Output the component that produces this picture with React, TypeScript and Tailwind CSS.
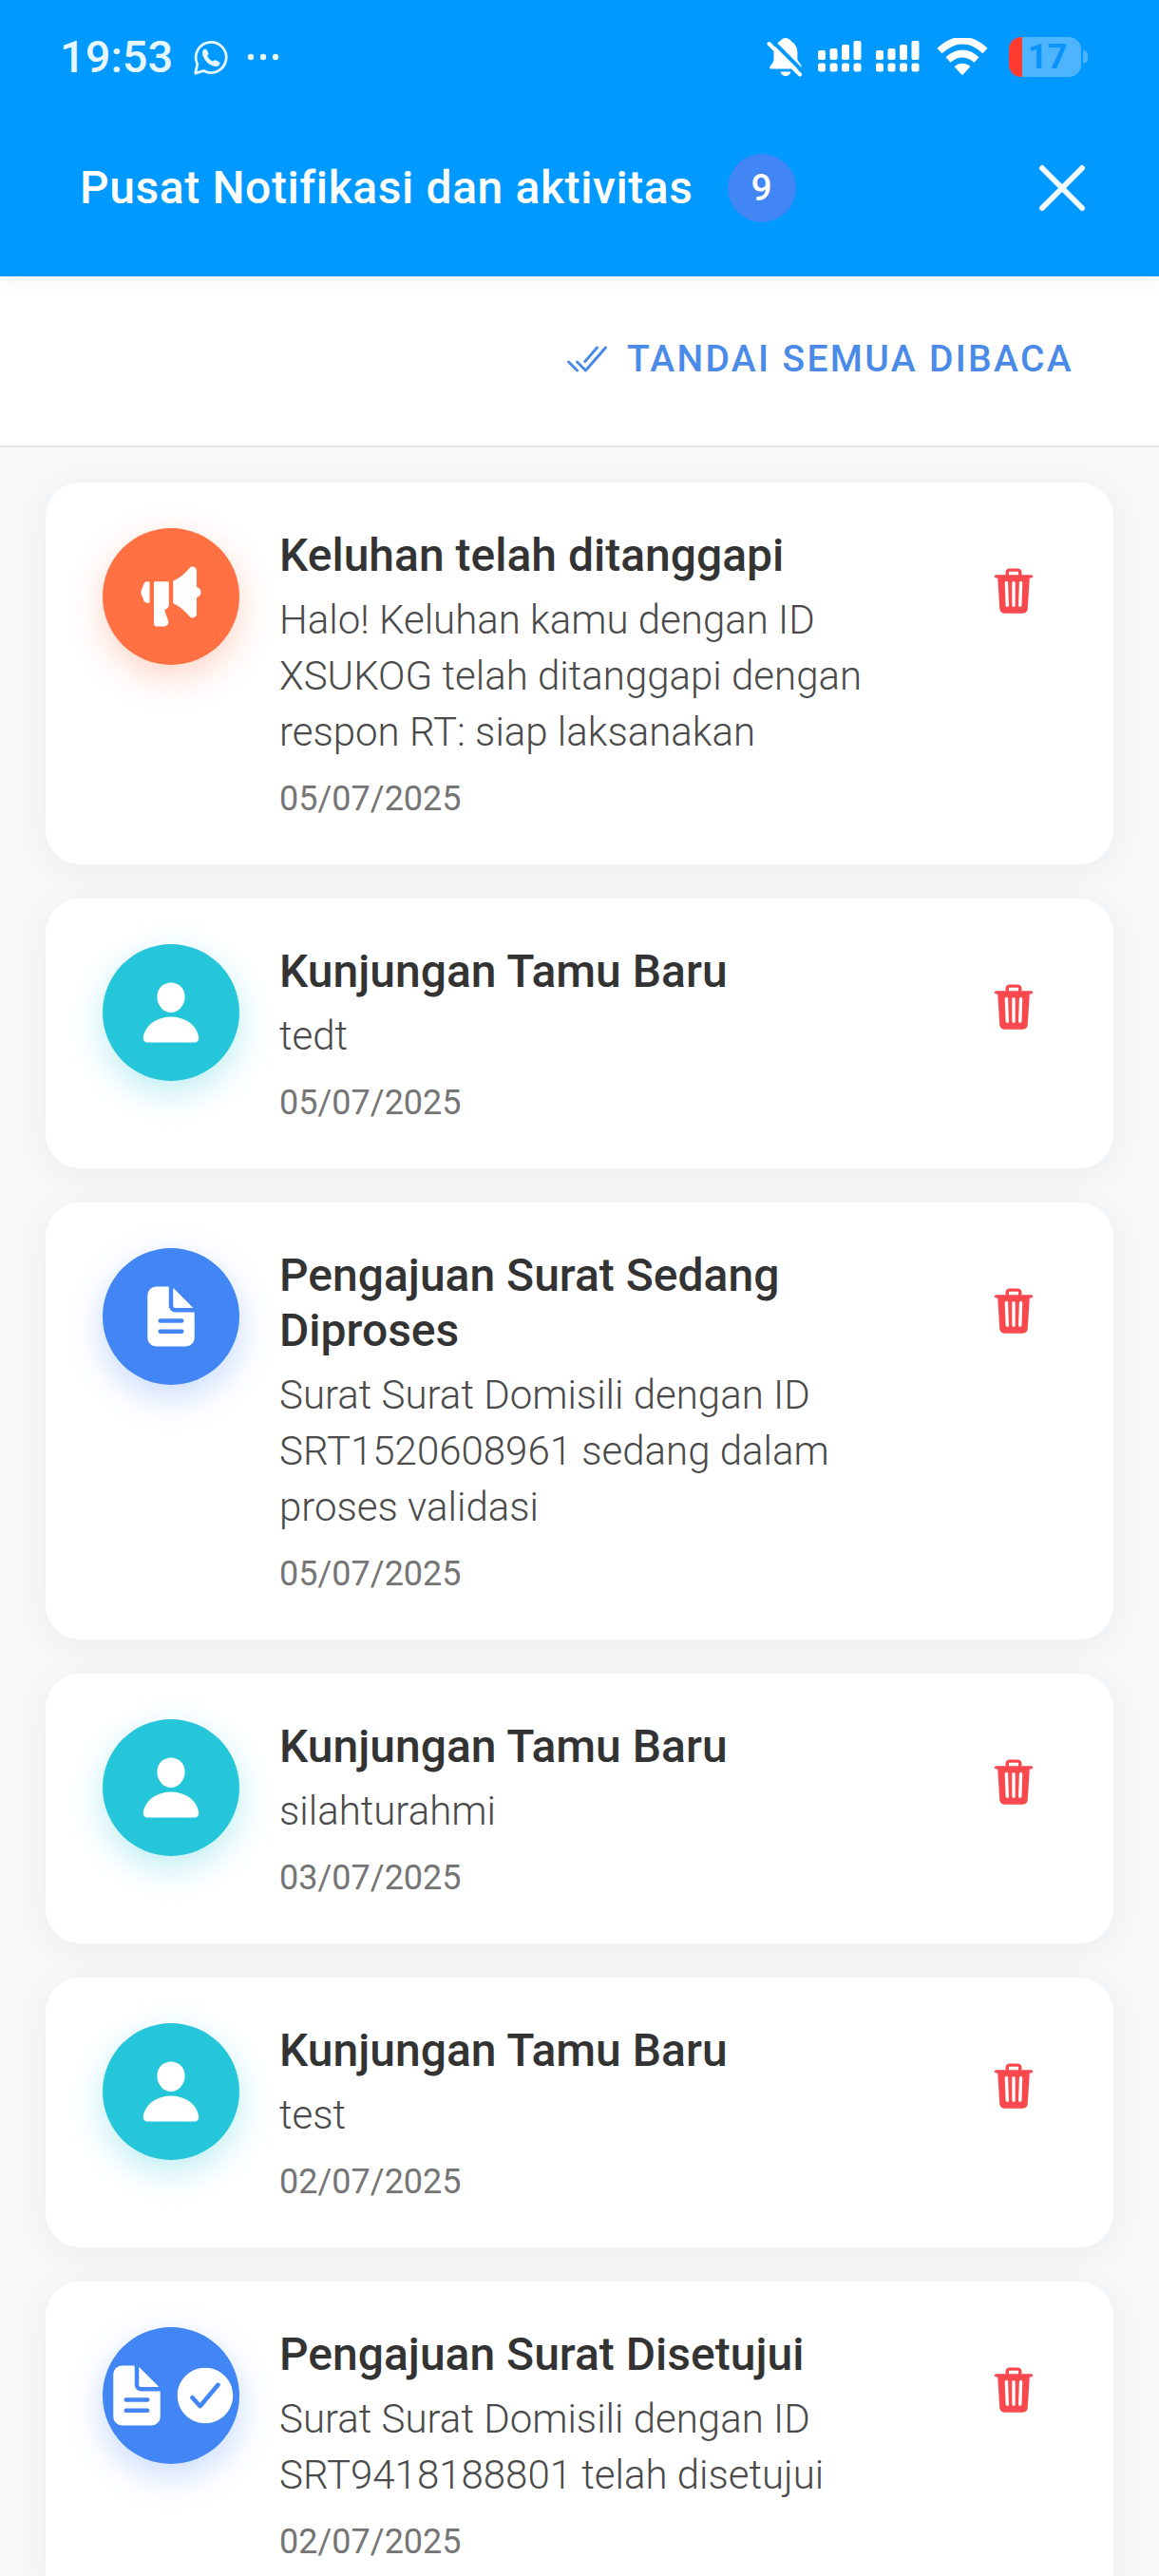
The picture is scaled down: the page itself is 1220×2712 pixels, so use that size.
import {
  IoCheckmarkCircle,
  IoCheckmarkDoneOutline,
  IoCloseOutline,
  IoDocumentText,
  IoMegaphone,
  IoPerson,
  IoTrash,
} from "react-icons/io5";

type Kind = "complaint" | "guest" | "letter" | "approved";

interface Notice {
  id: number;
  kind: Kind;
  title: string;
  body: string;
  date: string;
}

const notices: Notice[] = [
  {
    id: 1,
    kind: "complaint",
    title: "Keluhan telah ditanggapi",
    body: "Halo! Keluhan kamu dengan ID XSUKOG telah ditanggapi dengan respon RT: siap laksanakan",
    date: "05/07/2025",
  },
  { id: 2, kind: "guest", title: "Kunjungan Tamu Baru", body: "tedt", date: "05/07/2025" },
  {
    id: 3,
    kind: "letter",
    title: "Pengajuan Surat Sedang Diproses",
    body: "Surat Surat Domisili dengan ID SRT1520608961 sedang dalam proses validasi",
    date: "05/07/2025",
  },
  { id: 4, kind: "guest", title: "Kunjungan Tamu Baru", body: "silahturahmi", date: "03/07/2025" },
  { id: 5, kind: "guest", title: "Kunjungan Tamu Baru", body: "test", date: "02/07/2025" },
  {
    id: 6,
    kind: "approved",
    title: "Pengajuan Surat Disetujui",
    body: "Surat Surat Domisili dengan ID SRT9418188801 telah disetujui",
    date: "02/07/2025",
  },
];

const circleStyles: Record<Kind, string> = {
  complaint: "bg-[#ff7043] shadow-[0_12px_36px_rgba(255,112,67,0.3)]",
  guest: "bg-[#26c6da] shadow-[0_12px_36px_rgba(38,198,218,0.3)]",
  letter: "bg-[#4285f4] shadow-[0_12px_36px_rgba(66,133,244,0.3)]",
  approved: "bg-[#4285f4] shadow-[0_12px_36px_rgba(66,133,244,0.3)]",
};

function KindIcon({ kind }: { kind: Kind }) {
  if (kind === "complaint") return <IoMegaphone className="size-[72px] shrink-0" />;
  if (kind === "guest") return <IoPerson className="size-[72px] shrink-0" />;
  return (
    <>
      <IoDocumentText className="size-[72px] shrink-0" />
      {kind === "approved" && <IoCheckmarkCircle className="size-[72px] shrink-0" />}
    </>
  );
}

function SignalIcon() {
  return (
    <svg viewBox="0 0 46 34" className="h-[34px] w-[46px]" fill="currentColor" aria-hidden="true">
      <rect x="0" y="10" width="8" height="10" rx="2" />
      <rect x="12.5" y="8" width="8" height="12" rx="2" />
      <rect x="25" y="4" width="8" height="16" rx="2" />
      <rect x="37.5" y="0" width="8" height="20" rx="2" />
      <rect x="0" y="23.5" width="8" height="9" rx="2.5" />
      <rect x="12.5" y="23.5" width="8" height="9" rx="2.5" />
      <rect x="25" y="23.5" width="8" height="9" rx="2.5" />
      <rect x="37.5" y="23.5" width="8" height="9" rx="2.5" />
    </svg>
  );
}

function StatusBar() {
  return (
    <div className="flex h-[120px] items-center justify-between pr-[75px] pl-[63px] text-[#e6f7ff]">
      <div className="flex items-center">
        <span className="text-[47px] leading-[56px] font-medium">19:53</span>
        <svg viewBox="0 0 36 37" className="ml-[22px] h-[37px] w-[36px]" fill="none" aria-hidden="true">
          <path
            d="M1.7 35.2 3.8 25.5A16 16 0 1 1 10.5 32.5Z"
            stroke="currentColor"
            strokeWidth="2.8"
            strokeLinejoin="round"
          />
          <path
            d="M10.2 10.5c1.2-1.4 2.8-1.3 3.6.2l1.5 3c.4.9.2 1.7-.4 2.4l-.6.7c1 2.8 2.9 4.7 5.7 5.7l.9-.8c.7-.6 1.5-.7 2.3-.3l3.1 1.5c1.4.7 1.6 2.2.5 3.5-1.5 1.8-3.9 2.1-6.3 1.2-5.3-1.9-9.2-5.7-11-10.8-.8-2.4-.7-4.7.7-6.3Z"
            fill="currentColor"
          />
        </svg>
        <svg viewBox="0 0 34 8" className="ml-[20px] h-[8px] w-[34px]" fill="currentColor" aria-hidden="true">
          <circle cx="4" cy="4" r="3.2" />
          <circle cx="17" cy="4" r="3.2" />
          <circle cx="30" cy="4" r="3.2" />
        </svg>
      </div>
      <div className="flex items-center text-white">
        <svg viewBox="0 0 38 42" className="h-[42px] w-[38px]" aria-hidden="true">
          <path
            d="M20 1c2.3 0 4 1.2 5.500 3.1C30 7 32.4 11 32.4 16.5v7.5L36.5 30v3.5H4.5C3 33.5 2.8 31.5 4 30.2 6.5 27.5 7.5 25.5 7.5 22v-6c0-5.5 2.6-9.2 6.8-11.9C16 2.2 17.7 1 20 1Z"
            fill="currentColor"
          />
          <path d="M14.5 36.5h11c-.6 2.8-2.8 4.5-5.5 4.5s-4.9-1.7-5.5-4.5Z" fill="currentColor" />
          <path d="M4.5 2.5 38 36" stroke="#0099ff" strokeWidth="4" />
          <path d="M2.5 7 35 39.5" stroke="currentColor" strokeWidth="4" strokeLinecap="round" />
        </svg>
        <div className="ml-[16px] flex gap-[15px]">
          <SignalIcon />
          <SignalIcon />
        </div>
        <svg viewBox="0 0 54 40" className="ml-[18px] h-[40px] w-[54px]" aria-hidden="true">
          <path d="M3 13.5Q27-8.5 51 13.5" fill="none" stroke="currentColor" strokeWidth="7.5" />
          <path d="M12 23Q27 10 42 23" fill="none" stroke="currentColor" strokeWidth="7.5" />
          <path d="M18.5 30Q27 23.5 35.5 30L27.8 38.5Q27 39.2 26.2 38.5Z" fill="currentColor" />
        </svg>
        <div className="ml-[22px] flex h-[42px] w-[76px] overflow-hidden rounded-[13px] bg-[#4db5ff]">
          <div className="w-[14px] bg-[#ff3b30]" />
          <span className="ml-[6px] text-[36px] leading-[42px] font-bold text-[#0a94fa]">17</span>
        </div>
        <div className="ml-[2px] h-[14px] w-[5px] rounded-r-full bg-[#4db5ff]" />
      </div>
    </div>
  );
}

function NoticeCard({ notice }: { notice: Notice }) {
  return (
    <li className="flex items-start rounded-[36px] bg-white px-[60px] py-12 shadow-[0_6px_36px_rgba(0,0,0,0.05)]">
      <div
        className={`flex size-36 shrink-0 items-center justify-center rounded-full text-white ${circleStyles[notice.kind]}`}
      >
        <KindIcon kind={notice.kind} />
      </div>
      <div className="ml-[42px] min-w-0 flex-1">
        <h2 className="text-[48px] leading-[58px] font-medium text-[#333333]">{notice.title}</h2>
        <p className="mt-[9px] text-[42px] leading-[59px] font-light text-[#4a4a4a]">{notice.body}</p>
        <p className="mt-5 text-[36px] leading-[42px] text-[#757575]">{notice.date}</p>
      </div>
      <button
        type="button"
        aria-label="Hapus notifikasi"
        className="mt-[21px] ml-6 flex size-[90px] shrink-0 items-center justify-center text-[#f8494f]"
      >
        <IoTrash className="size-[54px]" />
      </button>
    </li>
  );
}

export default function App() {
  return (
    <div className="h-screen overflow-hidden bg-[#f7f8fa] font-[Roboto,sans-serif]">
      <header className="relative bg-[#0099ff] pb-[15px] shadow-[0_3px_24px_rgba(0,0,0,0.06)]">
        <StatusBar />
        <div className="flex h-[156px] items-center pr-[54px] pl-[84px]">
          <h1 className="text-[48px] leading-[56px] font-medium tracking-[0.0125em] text-white">
            Pusat Notifikasi dan aktivitas
          </h1>
          <span className="ml-9 flex size-[72px] items-center justify-center rounded-full bg-[#4285f4] text-[39px] leading-none font-medium text-white">
            9
          </span>
          <button type="button" aria-label="Tutup" className="ml-auto text-[#f0faff]">
            <IoCloseOutline className="size-24" />
          </button>
        </div>
      </header>
      <div className="flex h-[180px] items-center justify-end border-b-2 border-[#e6e6e6] bg-white pr-[90px] pb-1">
        <button
          type="button"
          className="flex items-center gap-[18px] text-[39px] leading-[46px] font-medium tracking-[0.06em] text-[#4a8ae8]"
        >
          <IoCheckmarkDoneOutline className="size-12" />
          TANDAI SEMUA DIBACA
        </button>
      </div>
      <ul className="flex flex-col gap-9 px-12 pt-[37px]">
        {notices.map((notice) => (
          <NoticeCard key={notice.id} notice={notice} />
        ))}
      </ul>
    </div>
  );
}
